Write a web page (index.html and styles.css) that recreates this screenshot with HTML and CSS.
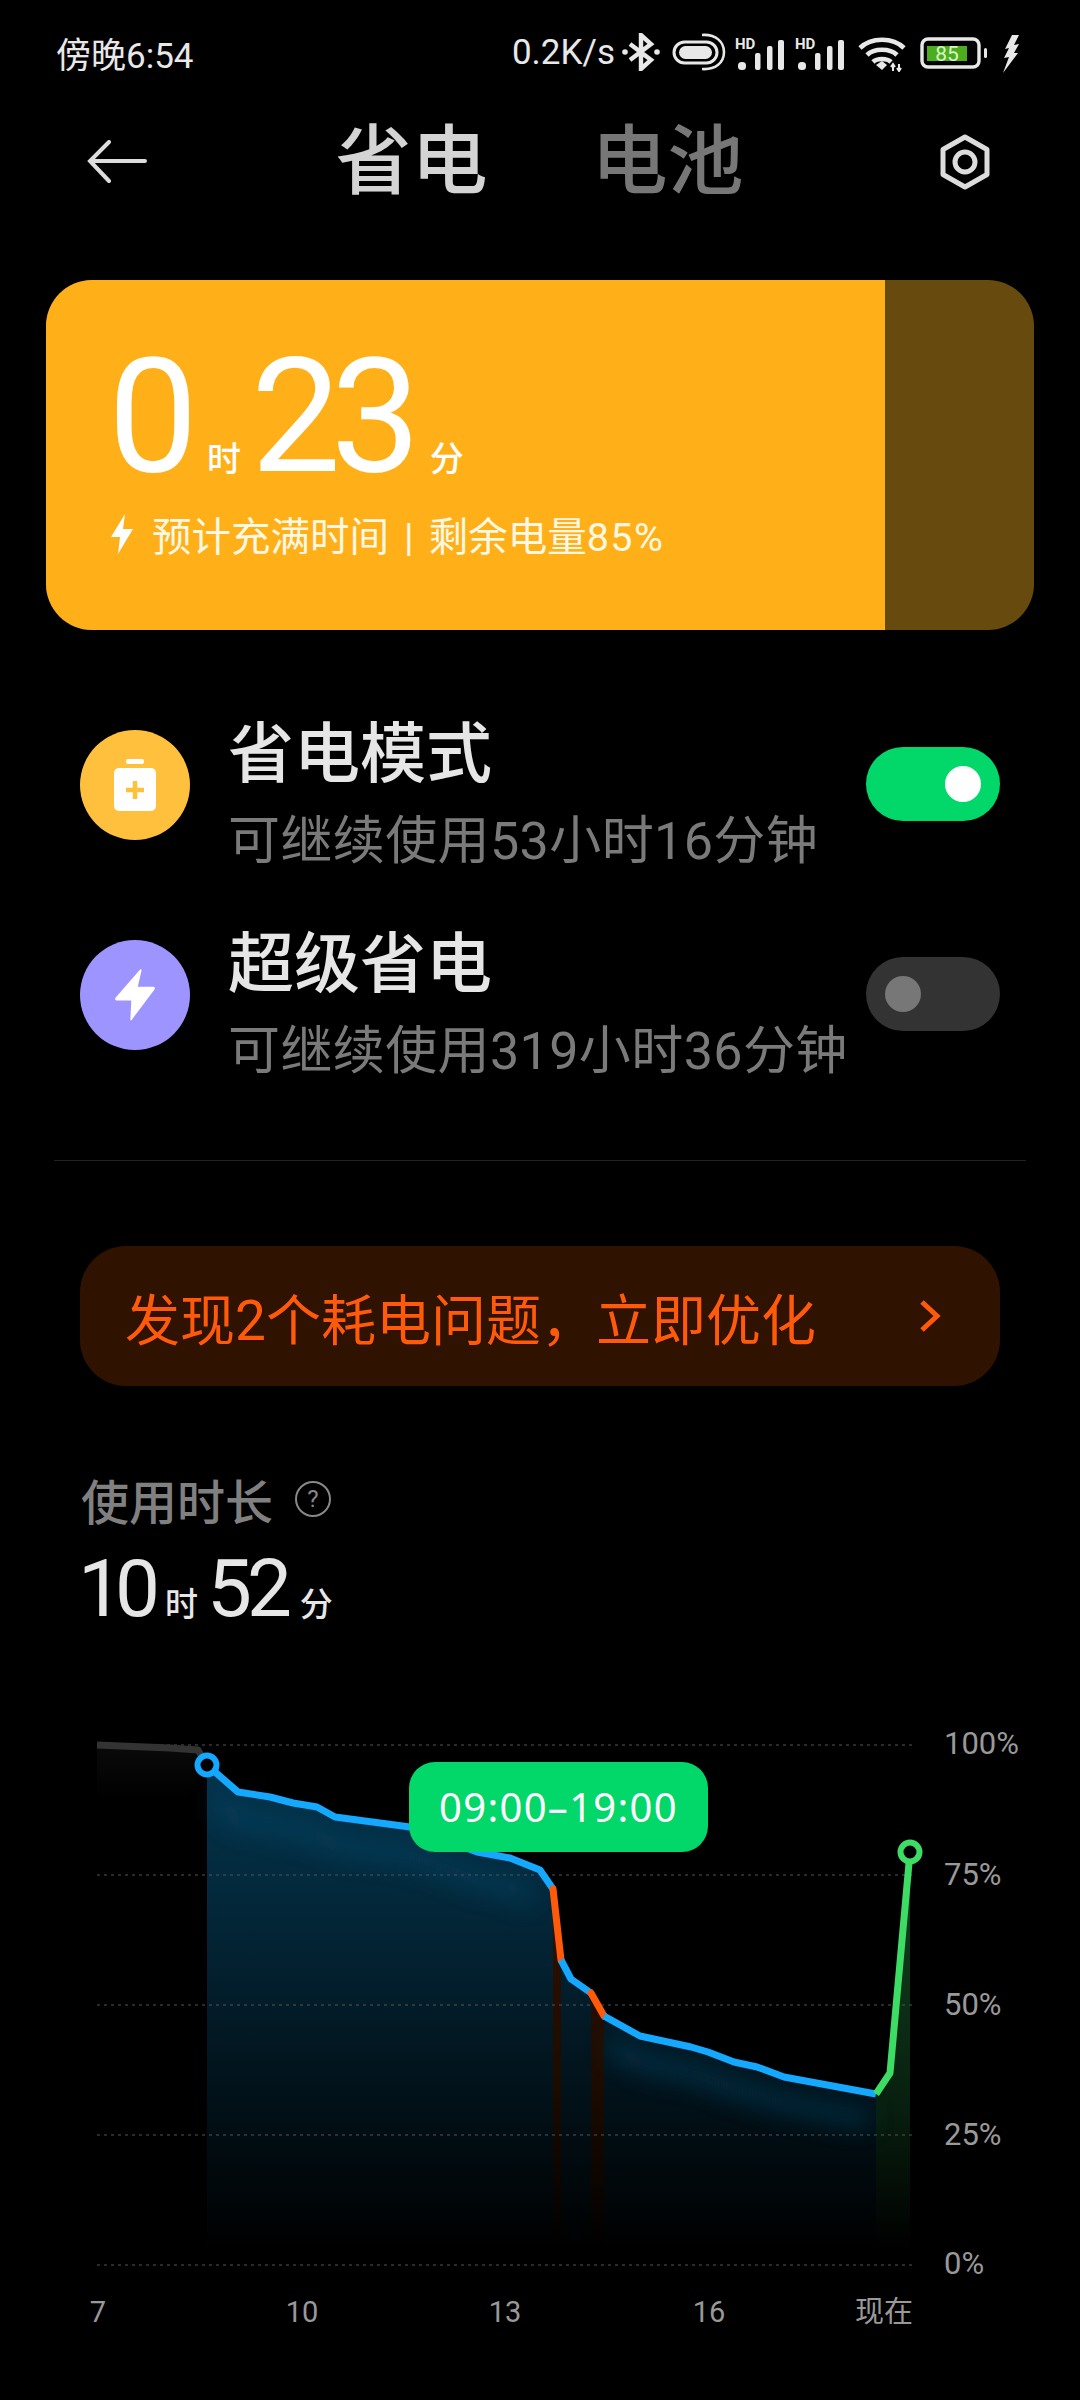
FILE: index.html
```html
<!DOCTYPE html>
<html>
  <head>
    <meta charset="UTF-8">
    <title>省电</title>
    <link rel="stylesheet" href="styles.css">
  </head>
  <body>
    <div class="statusbar">
      <span class="clock">傍晚6:54</span>
      <div class="status-right">
        <span class="speed">0.2K/s</span>
        <svg class="ic-bt" width="38" height="38" viewBox="0 0 38 38">
          <path d="M8 11 L29 27 L19 36 V2 L29 11 L8 27" fill="none" stroke="#e8e8e8" stroke-width="4.4"/>
          <circle cx="3" cy="19" r="2.8" fill="#e8e8e8"/>
          <circle cx="35" cy="19" r="2.8" fill="#e8e8e8"/>
        </svg>
        <svg class="ic-cap" width="54" height="38" viewBox="0 0 54 38">
          <rect x="2" y="9" width="43" height="21" rx="10.5" fill="none" stroke="#e8e8e8" stroke-width="3"/>
          <rect x="7" y="13" width="33" height="13" rx="6.5" fill="#e8e8e8"/>
          <path d="M30 2 C44 1 52 9 52 19 C52 30 43 37 30 36" fill="none" stroke="#e8e8e8" stroke-width="2.6"/>
        </svg>
        <svg class="ic-sig" width="50" height="36" viewBox="0 0 50 36">
          <text x="0" y="15" class="hd">HD</text>
          <rect x="3" y="28" width="8" height="8" rx="3.5" fill="#e8e8e8"/>
          <rect x="20" y="19" width="5.5" height="17" rx="2" fill="#e8e8e8"/>
          <rect x="32" y="12" width="5.5" height="24" rx="2" fill="#e8e8e8"/>
          <rect x="43" y="6" width="6" height="30" rx="2" fill="#e8e8e8"/>
        </svg>
        <svg class="ic-sig" width="50" height="36" viewBox="0 0 50 36">
          <text x="0" y="15" class="hd">HD</text>
          <rect x="3" y="28" width="8" height="8" rx="3.5" fill="#e8e8e8"/>
          <rect x="20" y="19" width="5.5" height="17" rx="2" fill="#e8e8e8"/>
          <rect x="32" y="12" width="5.5" height="24" rx="2" fill="#e8e8e8"/>
          <rect x="43" y="6" width="6" height="30" rx="2" fill="#e8e8e8"/>
        </svg>
        <svg class="ic-wifi" width="48" height="36" viewBox="0 0 48 36">
          <path d="M2 12 C13 1 35 1 46 12 M9 19 C16 12 32 12 39 19 M15 26 C19 22 29 22 33 26" fill="none" stroke="#e8e8e8" stroke-width="4.6"/>
          <path d="M18 29 L24 25 L29 29 L24 34 Z" fill="#e8e8e8"/>
          <path d="M35 28 V35 M33 31 L35 28 L37 31 M41 28 V35 M39 32 L41 35 L43 32" fill="none" stroke="#e8e8e8" stroke-width="2"/>
        </svg>
        <svg class="ic-batt" width="68" height="32" viewBox="0 0 68 32">
          <rect x="2" y="2" width="57" height="28" rx="6" fill="none" stroke="#e8e8e8" stroke-width="3.4"/>
          <rect x="7" y="9" width="40" height="15" fill="#4cae1e"/>
          <rect x="64" y="11" width="3" height="10" rx="1.5" fill="#e8e8e8"/>
          <text x="27" y="24" class="batt-num">85</text>
        </svg>
        <svg class="ic-bolt" width="18" height="38" viewBox="0 0 18 38">
          <path d="M10 0 L17 0 L12 10 L17 9 L12 18 L16 18 L1 38 L7 22 L2 23 L7 13 L3 14 Z" fill="#e8e8e8"/>
        </svg>
      </div>
    </div>

    <div class="topbar">
      <svg class="back" width="60" height="44" viewBox="0 0 60 44">
        <path d="M58 21 H4 M22 2 L3 21 L22 41" fill="none" stroke="#dcdcdc" stroke-width="4" stroke-linecap="round"/>
      </svg>
      <div class="tabs">
        <span class="tab on">省电</span>
        <span class="tab">电池</span>
      </div>
      <svg class="gear" width="54" height="58" viewBox="0 0 54 58">
        <path d="M27 4 L49 16.5 V41.5 L27 54 L5 41.5 V16.5 Z" fill="none" stroke="#dcdcdc" stroke-width="5" stroke-linejoin="round"/>
        <circle cx="27" cy="29" r="10" fill="none" stroke="#dcdcdc" stroke-width="5"/>
      </svg>
    </div>

    <div class="charge-card">
      <div class="charge-fill">
        <div class="charge-time">
          <span class="big">0</span><span class="unit">时</span><span class="big">23</span><span class="unit">分</span>
        </div>
        <div class="charge-note">
          <svg width="24" height="40" viewBox="0 0 24 40"><path d="M15 0 L1 23 H10 L8 40 L23 15 H13 Z" fill="#fff"/></svg>
          <span>预计充满时间<span class="sep">|</span>剩余电量<span class="pct">85%</span></span>
        </div>
      </div>
    </div>

    <div class="mode-row first">
      <div class="mode-icon yellow">
        <svg width="42" height="52" viewBox="0 0 42 52">
          <rect x="12" y="0" width="18" height="5" rx="2" fill="#fff"/>
          <rect x="0" y="9" width="42" height="43" rx="5" fill="#fff"/>
          <path d="M21 22 V40 M12 31 H30" stroke="#ffc13d" stroke-width="4.5"/>
        </svg>
      </div>
      <div class="mode-text">
        <div class="mode-title">省电模式</div>
        <div class="mode-sub">可继续使用53小时16分钟</div>
      </div>
      <div class="switch on"><span class="knob"></span></div>
    </div>
    <div class="mode-row">
      <div class="mode-icon purple">
        <svg width="42" height="52" viewBox="0 0 44 56">
          <path d="M27 1 L1 31 C0 33 1 34 3 34 H18 L17 54 C17 56 18 56 19 54 L43 22 C44 20 43 19 41 19 H25 L29 2 C29 0 28 0 27 1 Z" fill="#fff"/>
        </svg>
      </div>
      <div class="mode-text">
        <div class="mode-title">超级省电</div>
        <div class="mode-sub">可继续使用319小时36分钟</div>
      </div>
      <div class="switch"><span class="knob"></span></div>
    </div>

    <div class="divider"></div>

    <div class="alert">
      <span>发现2个耗电问题，立即优化</span>
      <svg width="22" height="32" viewBox="0 0 22 32"><path d="M3 2 L18 16 L3 30" fill="none" stroke="#ff5a0a" stroke-width="5"/></svg>
    </div>

    <div class="usage-head">
      <span>使用时长</span>
      <span class="help">?</span>
    </div>
    <div class="usage-time">
      <span class="num tight">10</span><span class="unit">时</span><span class="num">52</span><span class="unit">分</span>
    </div>

    <div class="chart">
      <svg width="1080" height="680" viewBox="0 1700 1080 680">
        <defs>
          <linearGradient id="gBlue" gradientUnits="userSpaceOnUse" x1="0" y1="1765" x2="0" y2="2250">
            <stop offset="0" stop-color="#04344d"/>
            <stop offset="0.3" stop-color="#032739"/>
            <stop offset="0.6" stop-color="#021620"/>
            <stop offset="1" stop-color="#000"/>
          </linearGradient>
          <linearGradient id="gOrange" gradientUnits="userSpaceOnUse" x1="0" y1="1890" x2="0" y2="2250">
            <stop offset="0" stop-color="#2e1100"/>
            <stop offset="0.5" stop-color="#1e0c00"/>
            <stop offset="1" stop-color="#000"/>
          </linearGradient>
          <linearGradient id="gGreen" gradientUnits="userSpaceOnUse" x1="0" y1="1880" x2="0" y2="2250">
            <stop offset="0" stop-color="#12401f"/>
            <stop offset="0.6" stop-color="#08200f"/>
            <stop offset="1" stop-color="#000"/>
          </linearGradient>
          <linearGradient id="gGrey" gradientUnits="userSpaceOnUse" x1="0" y1="1745" x2="0" y2="1800">
            <stop offset="0" stop-color="#0a0a0a"/>
            <stop offset="1" stop-color="#000"/>
          </linearGradient>
          <filter id="soft" x="-10%" y="-30%" width="120%" height="160%"><feGaussianBlur stdDeviation="12"/></filter>
        </defs>

        <polygon fill="url(#gGrey)" points="97,1745 170,1748 198,1750 207,1765 207,1800 97,1800"/>
        <polygon fill="url(#gBlue)" points="207,1765 238,1792 270,1797 293,1803 317,1807 335,1817 410,1827 477,1852 510,1858 540,1870 553,1889 553,2250 207,2250"/>
        <polygon fill="url(#gOrange)" points="553,1889 561,1960 561,2250 553,2250"/>
        <polygon fill="url(#gBlue)" points="561,1960 571,1979 591,1993 591,2250 561,2250"/>
        <polygon fill="url(#gOrange)" points="591,1993 604,2016 604,2250 591,2250"/>
        <polygon fill="url(#gBlue)" points="604,2016 640,2036 691,2047 708,2052 734,2062 757,2067 784,2077 876,2094 876,2250 604,2250"/>
        <polygon fill="url(#gGreen)" points="876,2094 890,2073 910,1863 910,2250 876,2250"/>
        <path class="glow" filter="url(#soft)" d="M215 1800 L238 1820 L270 1825 L317 1835 L335 1845 L410 1855 L477 1880 L510 1886 L530 1900 M610 2045 L640 2062 L691 2073 L734 2088 L784 2103 L870 2120"/>

        <g class="grid">
          <line x1="97" y1="1745" x2="913" y2="1745"/>
          <line x1="97" y1="1875" x2="913" y2="1875"/>
          <line x1="97" y1="2005" x2="913" y2="2005"/>
          <line x1="97" y1="2135" x2="913" y2="2135"/>
          <line x1="97" y1="2265" x2="913" y2="2265"/>
        </g>

        <polyline class="line grey" points="97,1745 170,1748 198,1750 207,1765"/>
        <polyline class="line blue" points="207,1765 238,1792 270,1797 293,1803 317,1807 335,1817 410,1827 477,1852 510,1858 540,1870 553,1889"/>
        <polyline class="line orange" points="553,1889 561,1960"/>
        <polyline class="line blue" points="561,1960 571,1979 591,1993"/>
        <polyline class="line orange" points="591,1993 604,2016"/>
        <polyline class="line blue" points="604,2016 640,2036 691,2047 708,2052 734,2062 757,2067 784,2077 876,2094"/>
        <polyline class="line green" points="876,2094 890,2073 909,1863"/>
        <circle class="dot" cx="207" cy="1765" r="9.5" stroke="#14a8ff"/>
        <circle class="dot" cx="910" cy="1852" r="9.5" stroke="#3ddc64"/>

        <g class="ylabel">
          <text x="944" y="1754">100%</text>
          <text x="944" y="1885">75%</text>
          <text x="944" y="2015">50%</text>
          <text x="944" y="2145">25%</text>
          <text x="944" y="2274">0%</text>
        </g>
        <g class="xlabel">
          <text x="98" y="2322">7</text>
          <text x="302" y="2322">10</text>
          <text x="505" y="2322">13</text>
          <text x="709" y="2322">16</text>
          <text x="884" y="2322">现在</text>
        </g>
      </svg>
      <div class="tip">09:00–19:00</div>
    </div>
  </body>
</html>
```

FILE: styles.css
```css
html, body {
  margin: 0;
  padding: 0;
}
body {
  width: 1080px;
  height: 2400px;
  overflow: hidden;
  background: #000;
  color: #e6e6e6;
  font-family: Roboto, "Noto Sans CJK SC", sans-serif;
}

/* status bar */
.statusbar {
  display: flex;
  justify-content: space-between;
  align-items: center;
  height: 104px;
  padding: 0 60px 0 56px;
  color: #e8e8e8;
}
.clock {
  font-size: 35px;
}
.status-right {
  display: flex;
  align-items: center;
}
.speed {
  font-size: 35px;
  margin-right: 7px;
}
.ic-bt { margin-right: 12px; }
.ic-cap { margin-right: 9px; }
.ic-sig { margin-right: 10px; }
.ic-wifi { margin: 3px 14px 0 3px; }
.ic-batt { margin: 2px 14px 0 0; }
.ic-bolt { margin-top: 4px; }
.hd {
  font-size: 15px;
  font-weight: 700;
  fill: #e8e8e8;
}
.batt-num {
  font-size: 21px;
  fill: #d8f5c4;
  text-anchor: middle;
}

/* title row */
.topbar {
  display: grid;
  grid-template-columns: 1fr auto 1fr;
  align-items: center;
  height: 116px;
  padding: 0 88px 0 87px;
}
.back {
  justify-self: start;
}
.gear {
  justify-self: end;
}
.tabs {
  display: flex;
  gap: 104px;
}
.tab {
  font-size: 76px;
  font-weight: 500;
  line-height: 116px;
  color: #777;
}
.tab.on {
  color: #d4d4d4;
}

/* charging card */
.charge-card {
  margin: 60px 46px 0;
  height: 350px;
  border-radius: 46px;
  overflow: hidden;
  background: #664a0e;
}
.charge-fill {
  width: 839px;
  height: 100%;
  padding: 52px 0 0 62px;
  box-sizing: border-box;
  background: #ffb018;
  color: #fff;
}
.charge-time {
  display: flex;
  align-items: baseline;
  line-height: 170px;
  height: 170px;
}
.big {
  font-size: 160px;
  font-weight: 450;
  letter-spacing: -10px;
}
.unit {
  font-size: 34px;
  font-weight: 500;
  margin: 0 10px 0 19px;
}
.charge-note {
  display: flex;
  align-items: center;
  gap: 18px;
  margin: 3px 0 0 2px;
  font-size: 39.5px;
  color: #fff8e4;
}
.sep {
  margin: 0 15px;
}
.pct {
  letter-spacing: 1.5px;
}

/* modes */
.mode-row {
  display: flex;
  align-items: center;
  height: 166px;
  margin-top: 44px;
  padding: 0 80px;
}
.mode-row.first {
  margin-top: 85px;
}
.mode-icon {
  width: 110px;
  height: 110px;
  margin: 0 38px 26px 0;
  border-radius: 50%;
  display: flex;
  align-items: center;
  justify-content: center;
  flex: none;
}
.yellow { background: #ffc13d; }
.purple { background: #9d94ff; }
.mode-text {
  flex: 1;
  white-space: nowrap;
}
.mode-title {
  font-size: 66px;
  font-weight: 500;
  line-height: 74px;
  color: #e6e6e6;
}
.mode-sub {
  font-size: 52px;
  line-height: 74px;
  margin-top: 13px;
  letter-spacing: 0.4px;
  color: #7a7a7a;
}
.switch {
  width: 134px;
  height: 74px;
  margin-bottom: 28px;
  border-radius: 37px;
  background: #333;
  display: flex;
  align-items: center;
  padding: 0 19px;
  box-sizing: border-box;
  flex: none;
}
.switch .knob {
  width: 36px;
  height: 36px;
  border-radius: 50%;
  background: #777;
}
.switch.on {
  background: #02d769;
  justify-content: flex-end;
}
.switch.on .knob {
  background: #fff;
}

.divider {
  height: 1px;
  margin: 69px 54px 0;
  background: #222;
}

/* problem banner */
.alert {
  display: flex;
  align-items: center;
  justify-content: space-between;
  height: 140px;
  margin: 85px 80px 0;
  padding: 0 59px 0 45px;
  border-radius: 46px;
  background: #301200;
  color: #ff5a0a;
  font-size: 55px;
}

/* usage */
.usage-head {
  display: flex;
  align-items: center;
  gap: 22px;
  height: 60px;
  margin-top: 83px;
  padding-left: 81px;
  font-size: 48px;
  font-weight: 500;
  color: #808080;
}
.help {
  width: 32px;
  height: 32px;
  border: 2px solid #888;
  border-radius: 50%;
  font-size: 24px;
  font-weight: 400;
  line-height: 32px;
  text-align: center;
  color: #888;
}
.usage-time {
  display: flex;
  align-items: baseline;
  height: 90px;
  margin-top: 15px;
  line-height: 90px;
  padding-left: 78px;
}
.num {
  font-size: 80px;
  letter-spacing: -5px;
}
.num.tight {
  letter-spacing: -8px;
}
.usage-time .unit {
  font-size: 33px;
  margin: 0 9px 0 13px;
}

/* chart */
.chart {
  position: relative;
  margin-top: 66px;
}
.chart svg {
  display: block;
}
.grid line {
  stroke: #555;
  stroke-width: 1;
  stroke-dasharray: 3 4;
}
.line {
  fill: none;
  stroke-width: 7;
  stroke-linejoin: round;
}
.line.grey { stroke: #333; }
.line.blue { stroke: #14a8ff; }
.line.orange { stroke: #ff5a0a; stroke-linecap: round; }
.line.green { stroke: #3ddc64; }
.dot {
  fill: #000;
  stroke-width: 6;
}
.glow {
  fill: none;
  stroke: #0a4c6e;
  stroke-width: 16;
  opacity: 0.55;
}
.ylabel text {
  font-size: 31px;
  fill: #999;
}
.xlabel text {
  font-size: 29px;
  fill: #999;
  text-anchor: middle;
}
.tip {
  position: absolute;
  left: 409px;
  top: 62px;
  width: 299px;
  height: 90px;
  border-radius: 26px;
  background: #02d769;
  color: #fff;
  font-family: "Noto Sans", sans-serif;
  font-size: 40px;
  line-height: 90px;
  text-align: center;
  letter-spacing: 1.3px;
}
```
